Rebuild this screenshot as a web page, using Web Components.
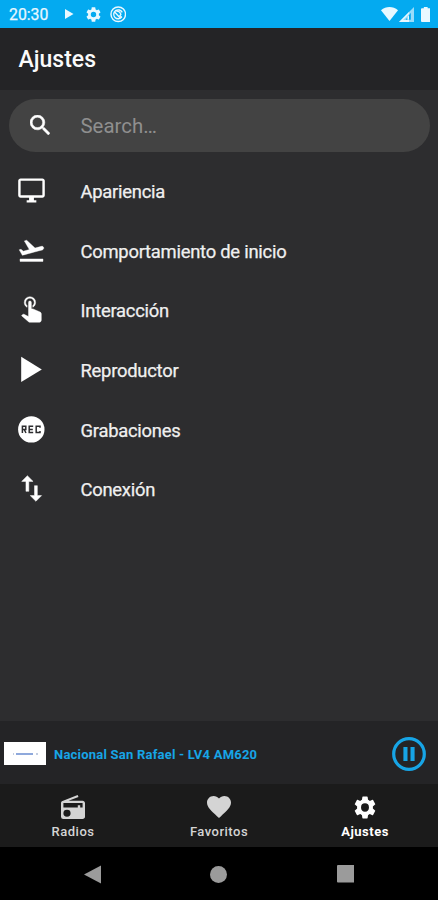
<!DOCTYPE html>
<html lang="es">
<head>
<meta charset="utf-8">
<title>Ajustes</title>
<style>
html, body { margin: 0; height: 100%; background: #2d2d2f; }
body { font-family: Roboto, "Noto Sans", sans-serif; overflow: hidden; }
</style>
</head>
<body>
<radio-app></radio-app>
<script>
const GEAR = '<path d="M19.14 12.94c.04-.3.06-.61.06-.94 0-.32-.02-.64-.07-.94l2.03-1.58a.49.49 0 0 0 .12-.61l-1.92-3.32a.488.488 0 0 0-.59-.22l-2.39.96c-.5-.38-1.03-.7-1.62-.94l-.36-2.54a.484.484 0 0 0-.48-.41h-3.84c-.24 0-.43.17-.47.41l-.36 2.54c-.59.24-1.13.57-1.62.94l-2.39-.96c-.22-.08-.47 0-.59.22L2.74 8.87c-.12.21-.08.47.12.61l2.03 1.58c-.05.3-.09.63-.09.94s.02.64.07.94l-2.03 1.58a.49.49 0 0 0-.12.61l1.92 3.32c.12.22.37.29.59.22l2.39-.96c.5.38 1.03.7 1.62.94l.36 2.54c.05.24.24.41.48.41h3.84c.24 0 .44-.17.47-.41l.36-2.54c.59-.24 1.13-.56 1.62-.94l2.39.96c.22.08.47 0 .59-.22l1.92-3.32c.12-.22.07-.47-.12-.61l-2.01-1.58zM12 15.6A3.6 3.6 0 1 1 12 8.4a3.6 3.6 0 0 1 0 7.2z"/>';
const ICONS = {
  gear: ['2 2 20 20', GEAR],
  miniplay: ['0 0 9 11', '<path d="M0 0l9 5.5L0 11z"/>'],
  cast: ['0 0 17 17', '<g fill="none" stroke="currentColor"><circle cx="8.5" cy="8.5" r="7.5" stroke-width="1.5"/><path d="M12.2 11.2A4.6 4.6 0 1 1 12.6 6.6M4.6 6l5.9 6.3M6.4 5.3c2.6-.3 4.6 1.4 4.9 4.1M9.8 9.2l2.4 2.6" stroke-width="1.4"/></g>'],
  wifi: ['0 0 17 14', '<path d="M0 3.2C5-1 12-1 17 3.2L8.5 14z"/>'],
  signal: ['0 0 15 15', '<path d="M15 0v15H0z" opacity=".65"/><path d="M10 5v2L4 13h6v2H0z"/><path d="M11.8 5.8v7H6.6z" fill="#04aaf0"/><path d="M10 8.2v4.6H8.4V10z"/>'],
  battery: ['0 0 10 16', '<path d="M3 0h4v1.2h2a1 1 0 0 1 1 1V15a1 1 0 0 1-1 1H1a1 1 0 0 1-1-1V2.2a1 1 0 0 1 1-1h2z"/>'],
  search: ['3 3 17.5 17.5', '<path stroke="currentColor" stroke-width=".4" d="M15.5 14h-.79l-.28-.27A6.47 6.47 0 0 0 16 9.5 6.5 6.5 0 1 0 9.5 16c1.61 0 3.09-.59 4.23-1.57l.27.28v.79l5 4.99L20.49 19l-4.99-5zm-6 0a4.5 4.5 0 1 1 0-9 4.5 4.5 0 0 1 0 9z"/>'],
  monitor: ['0 0 24 24', '<path d="M21 2H3c-1.1 0-2 .9-2 2v12c0 1.1.9 2 2 2h7v2H8v2h8v-2h-2v-2h7c1.1 0 2-.9 2-2V4c0-1.1-.9-2-2-2zm0 14H3V4h18v12z"/>'],
  takeoff: ['0 0 24 24', '<path d="M2.5 19h19v2h-19v-2zm19.57-9.36c-.21-.8-1.04-1.28-1.84-1.06L14.92 10l-6.9-6.43-1.93.51 4.14 7.17-4.97 1.33-1.97-1.54-1.45.39 2.59 4.49s7.12-1.9 16.57-4.43c.81-.23 1.28-1.05 1.07-1.85z" stroke="currentColor" stroke-width=".35"/>'],
  tap: ['1.9 3.8 20.4 20.4', '<path d="M10,9A1,1 0 0,1 11,8A1,1 0 0,1 12,9V13.47L13.21,13.6L18.15,15.79C18.68,16.03 19,16.56 19,17.14V21.5C18.97,22.32 18.32,22.97 17.5,23H11C10.62,23 10.26,22.85 10,22.57L5.1,18.37L5.84,17.6C6.03,17.39 6.3,17.28 6.58,17.28H6.8L10,19V9M11,5A4,4 0 0,1 15,9C15,10.5 14.2,11.77 13,12.46V11.24C13.61,10.69 14,9.89 14,9A3,3 0 0,0 11,6A3,3 0 0,0 8,9C8,9.89 8.39,10.69 9,11.24V12.46C7.8,11.77 7,10.5 7,9A4,4 0 0,1 11,5Z" stroke="currentColor" stroke-width=".3"/>'],
  play: ['0 0 29 29', '<path d="M4.2 1.8L24.8 14.4 4.2 27z"/>'],
  rec: ['0 0 29 29', '<circle cx="14.3" cy="14.4" r="13.2"/><g fill="none" stroke="#2d2d2f" stroke-width="1.5"><path d="M5.4 18v-6.8h3.4v3.3H5.4M7.2 14.5L9 18M16.2 11.2h-4v6.4h4M12.2 14.4h3.6M23 12.8v-1.6h-3.8v6.4H23V16"/></g>'],
  arrows: ['1.7 1.8 20.4 20.4', '<path d="M16 17.01V10h-2v7.01h-3L15 21l4-3.99h-3zM9 3L5 6.99h3V14h2V6.99h3L9 3z" stroke="currentColor" stroke-width=".35"/>'],
  radio: ['2 1 20 21', '<path d="M3.24 6.15C2.51 6.43 2 7.17 2 8v12a2 2 0 0 0 2 2h16c1.11 0 2-.89 2-2V8c0-1.11-.89-2-2-2H8.3l8.26-3.34L15.88 1 3.24 6.15zM7 20a3 3 0 1 1 0-6 3 3 0 0 1 0 6zm13-8h-2v-2h-2v2H4V8h16v4z"/>'],
  heart: ['2 3 20 18.35', '<path d="M12 21.35l-1.45-1.32C5.4 15.36 2 12.28 2 8.5 2 5.42 4.42 3 7.5 3c1.74 0 3.41.81 4.5 2.09C13.09 3.81 14.76 3 16.5 3 19.58 3 22 5.42 22 8.5c0 3.78-3.4 6.86-8.55 11.54L12 21.35z"/>'],
  pause: ['0 0 34 34', '<circle cx="17" cy="17" r="15.3" fill="none" stroke="currentColor" stroke-width="3.2"/><path d="M11.4 10h4.1v14h-4.1zM18.5 10h4.1v14h-4.1z"/>'],
  back: ['0 0 17 19', '<path d="M17 .5v18L0 9.5z"/>'],
  home: ['0 0 17 17', '<circle cx="8.5" cy="8.5" r="8.5"/>'],
  recent: ['0 0 18 18', '<rect width="18" height="18" rx="1"/>']
};

function define(name, css, html) {
  customElements.define(name, class extends HTMLElement {
    constructor() {
      super();
      this.attachShadow({ mode: 'open' }).innerHTML = `<style>${css}</style>${html}`;
    }
  });
}

customElements.define('app-icon', class extends HTMLElement {
  connectedCallback() {
    const [box, art] = ICONS[this.getAttribute('name')];
    const w = this.getAttribute('w'), h = this.getAttribute('h') || w;
    if (!this.shadowRoot) this.attachShadow({ mode: 'open' });
    this.shadowRoot.innerHTML = `<style>:host{display:block;flex:none}svg{display:block}</style>
      <svg width="${w}" height="${h}" viewBox="${box}" fill="currentColor" preserveAspectRatio="none" aria-hidden="true">${art}</svg>`;
  }
});

define('status-bar', `
  :host { display: flex; align-items: center; height: 27.5px; background: #04aaf0; color: #e9f8ff; box-sizing: border-box; padding: 1px 8px 0 9px; }
  time { font-size: 15.8px; width: 56px; line-height: 27px; -webkit-text-stroke: .25px; }
  .spacer { flex: 1; }
`, `<time>20:30</time>
  <app-icon name="miniplay" w="8.5" h="10"></app-icon>
  <app-icon name="gear" w="15" style="margin-left:12px"></app-icon>
  <app-icon name="cast" w="16.5" style="margin-left:9px"></app-icon>
  <span class="spacer"></span>
  <app-icon name="wifi" w="17" h="14"></app-icon>
  <app-icon name="signal" w="15" style="margin-left:1px"></app-icon>
  <app-icon name="battery" w="9.5" h="15" style="margin-left:6.5px"></app-icon>`);

define('app-header', `
  :host { display: flex; align-items: center; height: 62.5px; background: #242426; color: #fafafa; padding-left: 18.5px; }
  h1 { margin: 0; font-size: 23px; font-weight: 500; line-height: 28px; padding-top: 3px; }
`, `<h1><slot></slot></h1>`);

define('search-field', `
  :host { display: flex; align-items: center; height: 53px; margin: 9px 8.5px 0 9px; border-radius: 27px; background: #434343; color: #8f8f8f; font-size: 20.4px; }
  app-icon { color: #fff; margin: -2px 30.5px 0 21px; }
  span { padding-top: 1px; }
`, `<app-icon name="search" w="20"></app-icon><span><slot></slot></span>`);

define('setting-row', `
  :host { display: flex; align-items: center; height: 59.6px; padding-left: 17px; color: #f0f0f0; font-size: 18.4px; }
  span { margin-left: 34.5px; padding-top: 2px; letter-spacing: -.25px; -webkit-text-stroke: .25px; }
  ::slotted(app-icon) { color: #fff; }
`, `<slot name="icon"></slot><span><slot></slot></span>`);

define('player-bar', `
  :host { display: flex; align-items: center; height: 63px; background: #242426; color: #17a5e6; box-sizing: border-box; padding: 2px 12px 0 4px; font-size: 13px; font-weight: 700; letter-spacing: .22px; }
  .art { width: 42px; height: 23px; background: #fff; display: flex; align-items: center; justify-content: center; }
  .art i { width: 25px; height: 2px; background: linear-gradient(90deg, #c3cde0 1.5px, transparent 1.5px 3.5px, #8fa9dc 3.5px 20.5px, transparent 20.5px 23px, #c3cde0 23px); }
  .title { flex: 1; margin-left: 8px; padding-top: 1px; }
`, `<div class="art"><i></i></div><span class="title"><slot></slot></span><app-icon name="pause" w="34"></app-icon>`);

define('nav-tab', `
  :host { flex: 1; display: flex; flex-direction: column; align-items: center; color: #d4d4d4; font-size: 13px; font-weight: 500; letter-spacing: .5px; }
  :host([active]) { color: #fff; font-weight: 700; }
  .pic { height: 24px; margin-top: 11px; display: flex; align-items: center; }
  .label { line-height: 16px; margin-top: 5px; }
`, `<div class="pic"><slot name="icon"></slot></div><span class="label"><slot></slot></span>`);

define('tab-bar', `:host { display: flex; height: 63px; background: #1b1b1b; }`, `<slot></slot>`);

define('system-nav', `
  :host { display: flex; align-items: center; height: 53px; background: #000; color: #9b9b9b; box-sizing: border-box; padding: 1px 84px 0; justify-content: space-between; }
`, `<app-icon name="back" w="17" h="19"></app-icon><app-icon name="home" w="17"></app-icon><app-icon name="recent" w="17.5"></app-icon>`);

define('radio-app', `
  :host { display: flex; flex-direction: column; width: 438px; height: 900px; background: #2d2d2f; }
  main { flex: 1; padding-top: 9px; }
`, `
  <status-bar></status-bar>
  <app-header>Ajustes</app-header>
  <search-field>Search…</search-field>
  <main>
    <setting-row><app-icon slot="icon" name="monitor" w="29"></app-icon>Apariencia</setting-row>
    <setting-row><app-icon slot="icon" name="takeoff" w="29"></app-icon>Comportamiento de inicio</setting-row>
    <setting-row><app-icon slot="icon" name="tap" w="29"></app-icon>Interacción</setting-row>
    <setting-row><app-icon slot="icon" name="play" w="29"></app-icon>Reproductor</setting-row>
    <setting-row><app-icon slot="icon" name="rec" w="29"></app-icon>Grabaciones</setting-row>
    <setting-row><app-icon slot="icon" name="arrows" w="29"></app-icon>Conexión</setting-row>
  </main>
  <player-bar>Nacional San Rafael - LV4 AM620</player-bar>
  <tab-bar>
    <nav-tab><app-icon slot="icon" name="radio" w="24"></app-icon>Radios</nav-tab>
    <nav-tab><app-icon slot="icon" name="heart" w="24" h="22"></app-icon>Favoritos</nav-tab>
    <nav-tab active><app-icon slot="icon" name="gear" w="22" h="23"></app-icon>Ajustes</nav-tab>
  </tab-bar>
  <system-nav></system-nav>`);
</script>
</body>
</html>
